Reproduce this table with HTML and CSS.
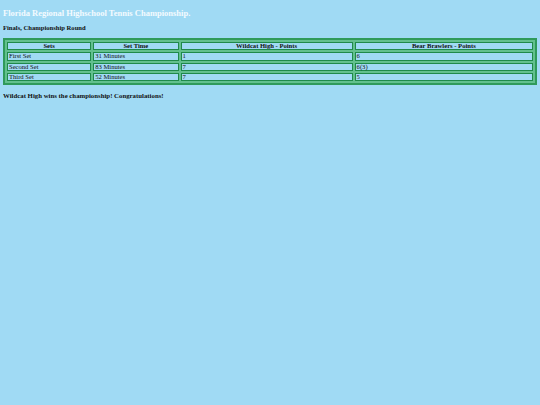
FILE: index.html
```html
<!DOCTYPE html>
<html lang="en">
<head>
    <meta charset="UTF-8">
    <title>Florida Regional Highschool Tennis Championship</title>
    <link rel="stylesheet" href="styles.css">
</head>
<body>
<h1 class="title">Florida Regional Highschool Tennis Championship.</h1>
<h4 class="round">Finals, Championship Round</h4>
<table class="scores">
    <tr>
        <th class="col-sets">Sets</th>
        <th class="col-time">Set Time</th>
        <th class="col-home">Wildcat High - Points</th>
        <th class="col-away">Bear Brawlers - Points</th>
    </tr>
    <tr>
        <td>First Set</td>
        <td>31 Minutes</td>
        <td>1</td>
        <td>6</td>
    </tr>
    <tr>
        <td>Second Set</td>
        <td>83 Minutes</td>
        <td>7</td>
        <td>6(3)</td>
    </tr>
    <tr>
        <td>Third Set</td>
        <td>52 Minutes</td>
        <td>7</td>
        <td>5</td>
    </tr>
</table>
<h4 class="result">Wildcat High wins the championship! Congratulations!</h4>
</body>
</html>
```

FILE: styles.css
```css
body {
    margin: 3px;
    background-color: #a0daf4;
    font-family: 'Liberation Serif', 'Times New Roman', serif;
    color: #111;
}
.title {
    font-size: 8.5px;
    line-height: 10px;
    color: #f4fbff;
    margin: 5px 0 6px 0;
}
.round {
    font-size: 6.6px;
    line-height: 8px;
    margin: 0 0 6px 0;
}
.scores {
    width: 100%;
    border: 2px solid #2f9a5a;
    border-spacing: 2px;
    background-color: #62c08e;
    font-size: 6.6px;
    line-height: 6.3px;
}
.scores th,
.scores td {
    border: 1px solid #1f8a4a;
    background-color: #a0daf4;
    padding: 0 1px;
    text-align: left;
}
.scores th {
    text-align: center;
}
.col-sets {
    width: 16.2%;
}
.col-time {
    width: 16.4%;
}
.col-home {
    width: 33.1%;
}
.result {
    font-size: 6.8px;
    line-height: 8px;
    margin: 7px 0;
}
```
